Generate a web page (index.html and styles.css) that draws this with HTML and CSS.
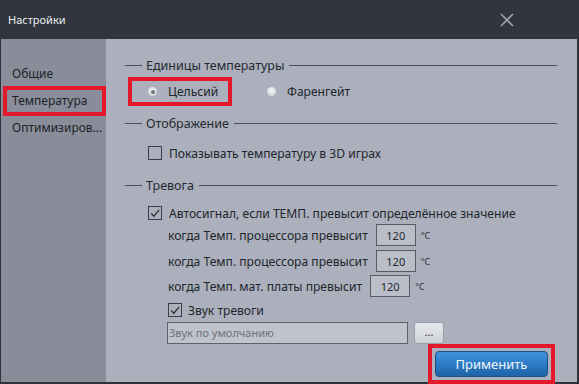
FILE: index.html
```html
<!DOCTYPE html>
<html lang="ru">
<head>
<meta charset="utf-8">
<title>Настройки</title>
<link rel="stylesheet" href="styles.css">
</head>
<body>
<div class="window">
  <div class="titlebar">
    <span class="title">Настройки</span>
    <svg class="close" width="14" height="14" viewBox="0 0 14 14"><path d="M1 1L13 13M13 1L1 13" stroke="#9ea2ab" stroke-width="1.6"/></svg>
  </div>
  <div class="main">
    <nav class="sidebar">
      <div class="nav-item">Общие</div>
      <div class="nav-item selected">Температура</div>
      <div class="nav-item">Оптимизиров...</div>
    </nav>
    <section class="content">
      <div class="group-head"><span class="dash"></span><span class="group-title">Единицы температуры</span><span class="rule"></span></div>
      <div class="radio-row">
        <label class="radio highlight"><span class="dot checked"></span>Цельсий</label>
        <label class="radio far"><span class="dot"></span>Фаренгейт</label>
      </div>
      <div class="group-head h2"><span class="dash"></span><span class="group-title">Отображение</span><span class="rule"></span></div>
      <label class="check-row r-show"><span class="box"></span>Показывать температуру в 3D играх</label>
      <div class="group-head h3"><span class="dash"></span><span class="group-title">Тревога</span><span class="rule"></span></div>
      <label class="check-row r-auto"><span class="box"><svg width="13" height="13" viewBox="0 0 13 13"><path d="M2.5 6.5L5.2 9.5L11 2.5" fill="none" stroke="#2c3036" stroke-width="1.4"/></svg></span>Автосигнал, если ТЕМП. превысит определённое значение</label>
      <div class="limit-row r1"><span class="limit-label">когда Темп. процессора превысит</span><span class="num">120</span><span class="unit">°C</span></div>
      <div class="limit-row r2"><span class="limit-label">когда Темп. процессора превысит</span><span class="num">120</span><span class="unit">°C</span></div>
      <div class="limit-row r3"><span class="limit-label">когда Темп. мат. платы превысит</span><span class="num">120</span><span class="unit">°C</span></div>
      <label class="check-row r-sound"><span class="box"><svg width="13" height="13" viewBox="0 0 13 13"><path d="M2.5 6.5L5.2 9.5L11 2.5" fill="none" stroke="#2c3036" stroke-width="1.4"/></svg></span>Звук тревоги</label>
      <div class="sound-row">
        <div class="sound-field">Звук по умолчанию</div>
        <div class="browse">...</div>
      </div>
      <div class="apply-row">
        <div class="apply-wrap"><button class="apply">Применить</button></div>
      </div>
    </section>
  </div>
</div>
</body>
</html>
```

FILE: styles.css
```css
* { box-sizing: border-box; }
html, body { margin: 0; padding: 0; }
body {
  width: 579px;
  height: 384px;
  overflow: hidden;
  font-family: "Noto Sans", "Open Sans", sans-serif;
  font-size: 12.1px;
  color: #22262c;
  background: #2f333b;
}
.window {
  width: 579px;
  height: 384px;
  display: flex;
  flex-direction: column;
  background: #2f333b;
}
.titlebar {
  height: 39px;
  flex: none;
  display: flex;
  align-items: center;
  justify-content: space-between;
  padding: 0 65px 0 8px;
  background: #31353e;
}
.title {
  color: #eceef2;
  font-size: 11px;
}
.close { display: block; }
.main {
  flex: 1;
  display: flex;
  margin: 0 2px 2px 1px;
  min-height: 0;
}
.sidebar {
  width: 105px;
  flex: none;
  background: #898d99;
  display: flex;
  flex-direction: column;
  gap: 5px;
  padding-top: 24px;
}
.nav-item {
  height: 22px;
  line-height: 22px;
  margin: 0 4px 0 6px;
  padding-left: 5px;
  white-space: nowrap;
  color: #1e2228;
  font-size: 12px;
}
.nav-item.selected {
  outline: 4px solid #e3192b;
}
.content {
  flex: 1;
  background: #abb0bc;
  padding: 16px 20px 0 19px;
  display: flex;
  flex-direction: column;
}
.group-head {
  height: 20px;
  display: flex;
  align-items: center;
  color: #262a30;
  font-size: 12.5px;
}
.dash {
  width: 17px;
  height: 1px;
  background: #4c5058;
  flex: none;
}
.group-title { margin: 0 5px 0 4px; }
.rule {
  flex: 1;
  height: 1px;
  background: #4c5058;
}
.radio-row {
  display: flex;
  align-items: center;
  height: 21px;
  margin-top: 6px;
}
.radio {
  display: flex;
  align-items: center;
  height: 21px;
  gap: 11px;
}
.radio.highlight {
  width: 96px;
  margin-left: 7px;
  padding-left: 16px;
  outline: 4px solid #e3192b;
}
.radio.far { margin-left: 39px; }
.dot {
  width: 9px;
  height: 9px;
  border-radius: 50%;
  flex: none;
  background: radial-gradient(circle at 50% 40%, #f4f5f7 0%, #d3d6dc 70%, #c0c4cc 100%);
  position: relative;
}
.dot.checked::after {
  content: "";
  position: absolute;
  left: 2.5px;
  top: 2.5px;
  width: 4px;
  height: 4px;
  border-radius: 50%;
  background: #6d7179;
}
.h2 { margin-top: 11px; }
.h3 { margin-top: 12px; }
.check-row {
  display: flex;
  align-items: center;
  height: 20px;
  margin-left: 23px;
  gap: 7px;
  white-space: nowrap;
}
.box {
  width: 14px;
  height: 14px;
  border: 1px solid #3a3e46;
  flex: none;
  display: flex;
  align-items: center;
  justify-content: center;
}
.box svg { display: block; }
.r-show { margin-top: 10px; }
.r-auto { margin-top: 8px; }
.limit-row {
  display: flex;
  align-items: center;
  height: 22px;
  margin-left: 43px;
  white-space: nowrap;
}
.r1 { margin-top: 1px; }
.r2 { margin-top: 4px; }
.r3 { margin-top: 3px; }
.limit-label { margin-right: 8px; }
.num {
  width: 40px;
  height: 22px;
  border: 1px solid #585c64;
  background: #b9bec9;
  font-size: 11px;
  display: flex;
  align-items: center;
  justify-content: center;
  color: #24282e;
}
.unit {
  font-size: 9px;
  margin-left: 5px;
  color: #2a2e34;
}
.r-sound { margin-left: 43px; margin-top: 3px; gap: 6px; }
.sound-row {
  display: flex;
  align-items: center;
  margin-top: 2px;
  margin-left: 42px;
  gap: 6px;
}
.sound-field {
  width: 241px;
  height: 22px;
  border: 1px solid #5e626a;
  background: #bfc3cc;
  font-size: 11px;
  color: #6e727b;
  padding-left: 1px;
  line-height: 20px;
}
.browse {
  width: 30px;
  height: 22px;
  border: 1px solid #9a9ea8;
  border-radius: 3px;
  background: linear-gradient(#e6e8ec, #cfd2d8);
  font-size: 11px;
  line-height: 18px;
  text-align: center;
  color: #2a2e34;
}
.apply-row {
  display: flex;
  justify-content: flex-end;
  margin-top: 4px;
}
.apply-wrap {
  margin-right: 6px;
  padding: 3px;
  outline: 4px solid #e3192b;
}
.apply {
  display: block;
  width: 113px;
  height: 26px;
  border: 1px solid #1b4d82;
  border-radius: 4px;
  background: linear-gradient(#3f95dc, #2a79c2 55%, #1f63a6);
  color: #f2f6fb;
  font-family: "Noto Sans", "Open Sans", sans-serif;
  font-size: 13px;
  padding: 0;
}
```
